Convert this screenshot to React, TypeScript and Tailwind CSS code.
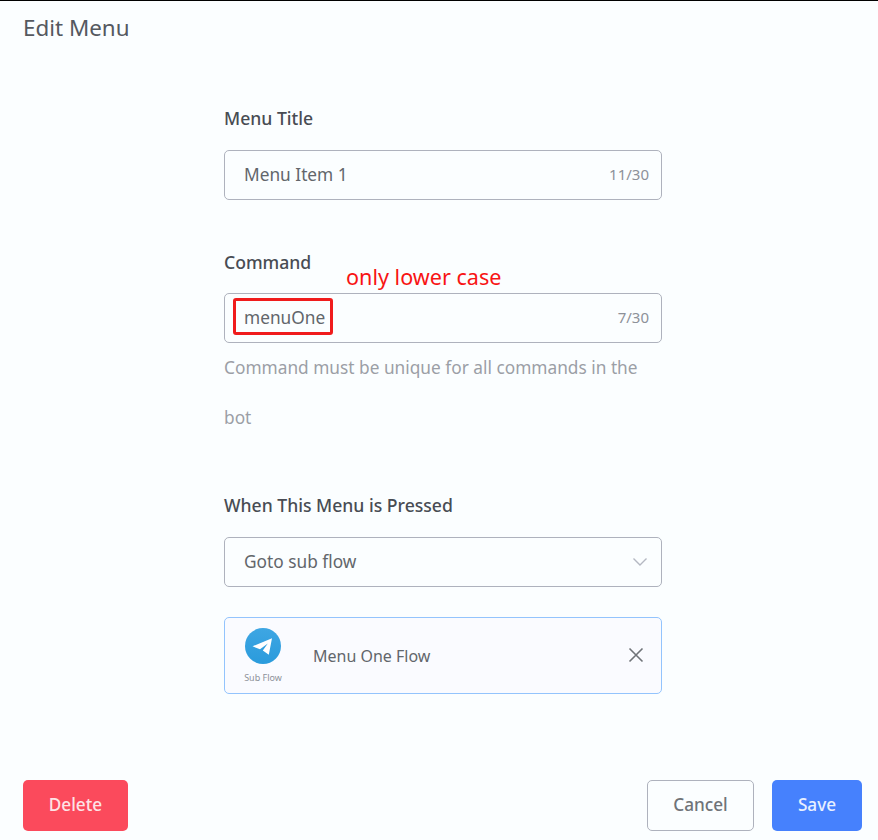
import React from "react";

const font = { fontFamily: '"Noto Sans", "Open Sans", sans-serif' };

function Field({ value, count }: { value: string; count: string }) {
  return (
    <div className="flex h-[50px] items-center justify-between rounded-[5px] border border-[#aeb2bd] pb-[1px] pl-[19px] pr-[12px]">
      <span className="text-[17.3px] text-[#62666b]">{value}</span>
      <span className="text-[15px] text-[#8d9199]">{count}</span>
    </div>
  );
}

export default function App() {
  return (
    <div
      className="flex h-[840px] w-[878px] flex-col overflow-hidden border-t border-black bg-[#fbfeff]"
      style={font}
    >
      <h1 className="ml-[23px] mt-[10px] text-[22.4px] font-normal leading-[34px] text-[#55595f]">Edit Menu</h1>

      <div className="ml-[224px] mt-[59px] w-[438px]">
        <label className="block text-[17.600px] font-medium leading-[28px] text-[#484c53]">Menu Title</label>
        <div className="mt-[18px]">
          <Field value="Menu Item 1" count="11/30" />
        </div>

        <label className="mt-[48px] block text-[17.600px] font-medium leading-[28px] text-[#484c53]">Command</label>
        <div className="relative mt-[17px]">
          <Field value="menuOne" count="7/30" />
          <div className="absolute left-[9px] top-[5px] h-[37px] w-[100px] rounded-[3px] border-[3px] border-[#f01c1c]" />
          <span className="absolute left-[122px] top-[-31px] text-[21.600px] leading-[30px] text-[#f81414]">only lower case</span>
        </div>
        <p className="text-[17.3px] leading-[50px] text-[#9b9fa6]">
          Command must be unique for all commands in the bot
        </p>

        <label className="mt-[48px] block text-[17.600px] font-medium leading-[28px] text-[#484c53]">When This Menu is Pressed</label>
        <div className="mt-[18px] flex h-[50px] items-center justify-between rounded-[5px] border border-[#aeb2bd] pb-[1px] pl-[19px] pr-[13px]">
          <span className="text-[17.3px] text-[#62666b]">Goto sub flow</span>
          <svg width="16" height="10" viewBox="0 0 16 10" fill="none" stroke="#b4b8c2" strokeWidth="1.4">
            <path d="M1.500 1.500 8 8l6.500-6.500" />
          </svg>
        </div>

        <div className="mt-[30px] flex h-[77px] items-center rounded-[5px] border border-[#93c4fd] bg-[#fafbff] pl-[18px] pr-[16px]">
          <div className="flex w-[40px] flex-col items-center">
            <svg width="36" height="36" viewBox="0 0 36 36">
              <defs>
                <linearGradient id="tg" x1="0" y1="0" x2="0" y2="1">
                  <stop offset="0" stopColor="#3ea6e3" />
                  <stop offset="1" stopColor="#2a9bdc" />
                </linearGradient>
              </defs>
              <circle cx="18" cy="18" r="18" fill="url(#tg)" />
              <path d="M7.500 18.300 27 10.300l-3.200 16.400-6-4.300 5-6.800-7.800 5.700z" fill="#ffffff" />
            </svg>
            <span className="mt-[8px] whitespace-nowrap text-[9px] leading-[12px] text-[#8d9199]">Sub Flow</span>
          </div>
          <span className="ml-[30px] flex-1 text-[16px] text-[#62666b]">Menu One Flow</span>
          <svg className="mb-[1px]" width="18" height="18" viewBox="0 0 18 18" fill="none" stroke="#6f7378" strokeWidth="1.6">
            <path d="M2.500 2.500 15.500 15.500M15.500 2.500 2.500 15.500" />
          </svg>
        </div>
      </div>

      <div className="mx-[16px] mb-[9px] ml-[23px] mt-auto flex items-center justify-between">
        <button className="flex h-[51px] w-[105px] items-center justify-center rounded-[5px] bg-[#fb4a5c] pb-[2px] text-[17.2px] font-medium text-[#fde3e6]">
          Delete
        </button>
        <div className="flex gap-[18px]">
          <button className="flex h-[51px] w-[107px] items-center justify-center rounded-[5px] border border-[#aeb2bd] pb-[2px] text-[17.2px] font-medium text-[#6f7378]">
            Cancel
          </button>
          <button className="flex h-[51px] w-[90px] items-center justify-center rounded-[5px] bg-[#4681fd] pb-[2px] text-[17.2px] font-medium text-[#e8f0ff]">
            Save
          </button>
        </div>
      </div>
    </div>
  );
}
